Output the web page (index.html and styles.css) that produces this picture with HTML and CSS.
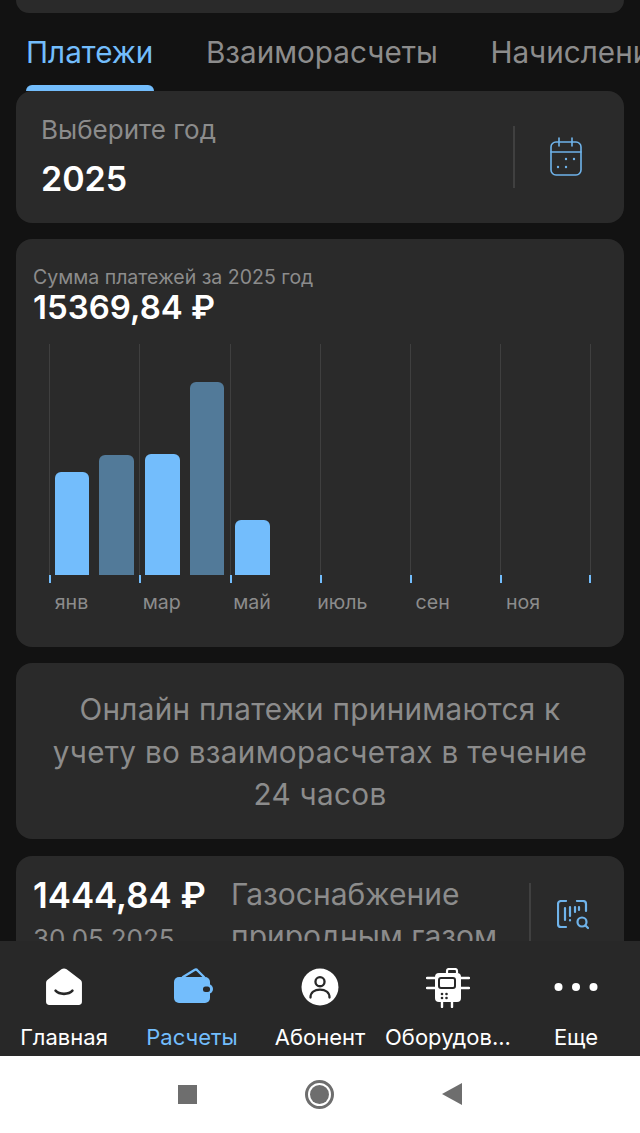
FILE: index.html
```html
<!DOCTYPE html>
<html lang="ru">

<head>
    <meta charset="UTF-8">
    <meta name="viewport" content="width=device-width, initial-scale=1.0">
    <title>Расчеты</title>
    <link rel="stylesheet" href="styles.css">
</head>

<body>
    <div class="screen">
        <main class="content">
            <div class="card top-stub"></div>

            <div class="tabs">
                <div class="tab active">Платежи</div>
                <div class="tab">Взаиморасчеты</div>
                <div class="tab">Начисления</div>
            </div>

            <section class="card year-card">
                <div class="year-text">
                    <div class="year-label">Выберите год</div>
                    <div class="year-value">2025</div>
                </div>
                <div class="year-action">
                    <svg class="icon-calendar" viewBox="0 0 32 39" fill="none" stroke="#6fb3ea" stroke-width="1.6" stroke-linecap="round">
                        <rect x="1" y="5" width="30" height="33" rx="5" />
                        <path d="M1 15h30M9 1v8M22 1v8" />
                        <g fill="#6fb3ea" stroke="none">
                            <circle cx="16" cy="22" r="1.2" />
                            <circle cx="24" cy="22" r="1.2" />
                            <circle cx="8" cy="30" r="1.2" />
                            <circle cx="16" cy="30" r="1.2" />
                        </g>
                    </svg>
                </div>
            </section>

            <section class="card chart-card">
                <div class="chart-label">Сумма платежей за 2025 год</div>
                <div class="chart-total">15369,84 ₽</div>
                <div class="plot">
                    <div class="slot major"><div class="bar" style="height: 103px"></div></div>
                    <div class="slot"><div class="bar dim" style="height: 120px"></div></div>
                    <div class="slot major"><div class="bar" style="height: 121px"></div></div>
                    <div class="slot"><div class="bar dim" style="height: 193px"></div></div>
                    <div class="slot major"><div class="bar" style="height: 55px"></div></div>
                    <div class="slot"></div>
                    <div class="slot major"></div>
                    <div class="slot"></div>
                    <div class="slot major"></div>
                    <div class="slot"></div>
                    <div class="slot major"></div>
                    <div class="slot last"></div>
                </div>
                <div class="months">
                    <span>янв</span>
                    <span>мар</span>
                    <span>май</span>
                    <span>июль</span>
                    <span>сен</span>
                    <span>ноя</span>
                </div>
            </section>

            <section class="card info-card">
                Онлайн платежи принимаются к учету во взаиморасчетах в течение 24 часов
            </section>

            <section class="card pay-card">
                <div class="pay-left">
                    <div class="pay-sum">1444,84 ₽</div>
                    <div class="pay-date">30.05.2025</div>
                </div>
                <div class="pay-name">Газоснабжение природным газом</div>
                <div class="pay-action">
                    <svg class="icon-scan" viewBox="0 0 32 30" fill="none" stroke="#6fb3ea" stroke-width="2.2" stroke-linecap="round">
                        <path d="M9 1H4a3 3 0 0 0-3 3v20a3 3 0 0 0 3 3h5M20 1h6a3 3 0 0 1 3 3v7" />
                        <path d="M8 8v12M13 7v9M13 20v.5M18 7v5M22 7v3" />
                        <circle cx="25" cy="22" r="4.5" />
                        <path d="M28.500 25.500L31 28" />
                    </svg>
                </div>
            </section>
        </main>

        <nav class="tabbar">
            <div class="nav-item">
                <svg class="nav-icon" viewBox="0 0 36 36">
                    <path d="M1 14.500c0-1.500.6-2.600 1.800-3.500L15.500 1.200c1.500-1.100 3.500-1.100 5 0L33.200 11c1.200.9 1.800 2 1.800 3.500V32c0 2-1.300 3-3 3H4c-1.700 0-3-1-3-3z" fill="#fff" />
                    <path d="M10 21.500c3.500 4 12.500 4 16 0" fill="none" stroke="#282828" stroke-width="2.400" stroke-linecap="round" />
                </svg>
                <span>Главная</span>
            </div>
            <div class="nav-item active">
                <svg class="nav-icon wallet" viewBox="0 0 40 36">
                    <path d="M9 9L20.500 2c1.200-.7 2.200-.5 3 .5L30 9" fill="none" stroke="#73bdfc" stroke-width="2.400" stroke-linejoin="round" stroke-linecap="round" />
                    <rect x="0" y="9" width="36" height="26" rx="5" fill="#73bdfc" />
                    <rect x="27" y="16" width="12" height="10" rx="5" fill="#73bdfc" />
                    <rect x="29" y="18.500" width="7" height="5.500" rx="2.500" fill="#282828" />
                </svg>
                <span>Расчеты</span>
            </div>
            <div class="nav-item">
                <svg class="nav-icon" viewBox="0 0 36 36">
                    <circle cx="18" cy="18" r="17.500" fill="#fff" />
                    <circle cx="18" cy="13" r="4.300" fill="none" stroke="#282828" stroke-width="2.200" />
                    <path d="M9 28c0-5 4-7.500 9-7.500s9 2.500 9 7.500" fill="none" stroke="#282828" stroke-width="2.200" stroke-linecap="round" />
                </svg>
                <span>Абонент</span>
            </div>
            <div class="nav-item">
                <svg class="nav-icon device" viewBox="0 0 44 40">
                    <path d="M1 10h8M1 20h8M35 10h8M35 20h8M16 34v5M26 34v5" stroke="#fff" stroke-width="2.400" stroke-linecap="round" fill="none" />
                    <path d="M21 5V3c0-1 .8-2 2-2h6c1.200 0 2 1 2 2v2" stroke="#fff" stroke-width="2.200" fill="none" />
                    <rect x="9" y="5" width="26" height="29" rx="4" fill="#fff" />
                    <rect x="13" y="10" width="16" height="10" rx="2" fill="#fff" stroke="#282828" stroke-width="2" />
                    <g fill="#282828">
                        <circle cx="16" cy="26" r="1.300" />
                        <circle cx="20.500" cy="26" r="1.300" />
                        <circle cx="16" cy="30" r="1.300" />
                        <circle cx="20.500" cy="30" r="1.300" />
                    </g>
                </svg>
                <span>Оборудов...</span>
            </div>
            <div class="nav-item">
                <svg class="nav-icon dots" viewBox="0 0 44 36">
                    <circle cx="4.500" cy="18" r="4" fill="#fff" />
                    <circle cx="22" cy="18" r="4" fill="#fff" />
                    <circle cx="39.500" cy="18" r="4" fill="#fff" />
                </svg>
                <span>Еще</span>
            </div>
        </nav>

        <div class="sysbar">
            <div class="sys-square"></div>
            <div class="sys-circle"></div>
            <svg class="sys-back" viewBox="0 0 20 22">
                <path d="M20 0v22L0 11z" fill="#6e6e6e" />
            </svg>
        </div>
    </div>
</body>

</html>
```

FILE: styles.css
```css
body {
    margin: 0;
    font-family: Inter, "Noto Sans", sans-serif;
    background: #121212;
}

.screen {
    width: 640px;
    height: 1133px;
    display: flex;
    flex-direction: column;
    overflow: hidden;
}

.content {
    height: 941px;
    flex: none;
    overflow: hidden;
    padding: 0 16px;
    box-sizing: border-box;
}

.card {
    background: #2a2a2a;
    border-radius: 16px;
    margin-bottom: 16px;
}

.top-stub {
    height: 13px;
    margin: 0;
    border-radius: 0 0 16px 16px;
}

/* tabs */
.tabs {
    display: flex;
    gap: 52.5px;
    height: 78px;
    margin: 0 -16px;
    padding-left: 26px;
    overflow: hidden;
    white-space: nowrap;
}

.tab {
    font-size: 29.7px;
    line-height: 34px;
    padding-top: 22px;
    color: #8c8c8c;
    position: relative;
}

.tab.active {
    color: #73bdfc;
}

.tab.active::after {
    content: "";
    position: absolute;
    left: 0;
    right: -1px;
    bottom: 0;
    height: 6px;
    background: #73bdfc;
    border-radius: 6px 6px 0 0;
}

/* year */
.year-card {
    height: 132px;
    display: flex;
    justify-content: space-between;
    align-items: center;
}

.year-text {
    padding-left: 25px;
}

.year-label {
    font-size: 26px;
    line-height: 30px;
    color: #8c8c8c;
    margin-bottom: 14px;
}

.year-value {
    font-size: 34px;
    line-height: 40px;
    font-weight: 600;
    color: #fff;
}

.year-action {
    width: 111px;
    height: 62px;
    padding: 0 8px 2px 0;
    display: flex;
    align-items: center;
    justify-content: center;
    border-left: 2px solid #404040;
    box-sizing: border-box;
}

.icon-calendar {
    width: 32px;
    height: 39px;
}

/* chart */
.chart-card {
    height: 408px;
    padding: 26px 0 0 17px;
    box-sizing: border-box;
}

.chart-label {
    font-size: 19.5px;
    line-height: 24px;
    color: #8c8c8c;
}

.chart-total {
    font-size: 33px;
    line-height: 36px;
    font-weight: 600;
    color: #fff;
}

.plot {
    display: flex;
    height: 231px;
    margin: 19px 0 0 16px;
}

.slot {
    width: 45.15px;
    height: 100%;
    flex: none;
    display: flex;
    align-items: flex-end;
    justify-content: center;
    position: relative;
    box-sizing: border-box;
}

.slot.major {
    border-left: 1px solid #3f3f3f;
}

.slot.last {
    border-right: 1px solid #3f3f3f;
}

.slot.major::after,
.slot.last::after {
    content: "";
    position: absolute;
    left: -1px;
    top: 100%;
    width: 2px;
    height: 8px;
    background: #73bdfc;
}

.slot.last::after {
    left: auto;
    right: -1px;
}

.bar {
    width: 34.5px;
    background: #73bdfc;
    border-radius: 6px 6px 0 0;
}

.bar.dim {
    background: #527a99;
}

.months {
    display: grid;
    grid-template-columns: repeat(6, 90.3px);
    margin-top: 15px;
    font-size: 19.6px;
    line-height: 24px;
    color: #8c8c8c;
}

.months span {
    width: 45px;
    margin-left: 16px;
    display: flex;
    justify-content: center;
}

/* info */
.info-card {
    height: 176px;
    padding: 25px 30px 0;
    box-sizing: border-box;
    font-size: 29.7px;
    line-height: 42.5px;
    letter-spacing: 0.3px;
    text-align: center;
    color: #8c8c8c;
}

/* payment */
.pay-card {
    height: 130px;
    margin-top: 17px;
    padding: 19px 0 0 17px;
    box-sizing: border-box;
    display: flex;
}

.pay-left {
    width: 199px;
    flex: none;
}

.pay-sum {
    font-size: 34.8px;
    line-height: 40px;
    font-weight: 600;
    color: #fff;
    white-space: nowrap;
}

.pay-date {
    font-size: 26px;
    line-height: 40px;
    margin-top: 4px;
    color: #8c8c8c;
}

.pay-name {
    width: 298px;
    flex: none;
    font-size: 30px;
    line-height: 42px;
    margin: -2px 0 0 -1px;
    color: #8c8c8c;
}

.pay-action {
    height: 80px;
    margin-top: 8px;
    width: 95px;
    padding: 17px 10px 0 0;
    display: flex;
    justify-content: center;
    box-sizing: border-box;
    border-left: 2px solid #404040;
}

.icon-scan {
    width: 32px;
    height: 30px;
}

/* bottom nav */
.tabbar {
    height: 115px;
    flex: none;
    background: #282828;
    display: grid;
    grid-template-columns: repeat(5, 128px);
    white-space: nowrap;
}

.nav-item {
    display: flex;
    flex-direction: column;
    align-items: center;
    padding-top: 27px;
    font-size: 22px;
    line-height: 26px;
    color: #fff;
}

.nav-item.active {
    color: #73bdfc;
}

.nav-icon {
    width: 38px;
    height: 38px;
    margin-bottom: 18px;
}

.nav-icon.wallet {
    width: 40px;
    height: 36px;
    margin: 0 0 20px 3px;
}

.nav-icon.device {
    width: 44px;
    height: 40px;
    margin-bottom: 16px;
}

.nav-icon.dots {
    width: 44px;
    height: 36px;
    margin: 1px 0 19px;
}

.sysbar {
    flex: 1;
    background: #fff;
    display: flex;
    align-items: center;
    justify-content: center;
    gap: 108px;
    padding-bottom: 1px;
}

.sys-square {
    width: 19px;
    height: 19px;
    background: #6e6e6e;
}

.sys-circle {
    width: 19px;
    height: 19px;
    padding: 2px;
    border: 3px solid #6e6e6e;
    border-radius: 50%;
    background: #6e6e6e content-box;
}

.sys-back {
    width: 20px;
    height: 22px;
}
```
